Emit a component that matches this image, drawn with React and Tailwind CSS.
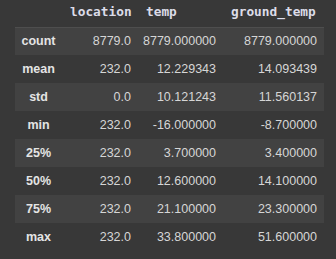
const columns = ["location", "temp", "ground_temp"];

const rows = [
  ["count", "8779.0", "8779.000000", "8779.000000"],
  ["mean", "232.0", "12.229343", "14.093439"],
  ["std", "0.0", "10.121243", "11.560137"],
  ["min", "232.0", "-16.000000", "-8.700000"],
  ["25%", "232.0", "3.700000", "3.400000"],
  ["50%", "232.0", "12.600000", "14.100000"],
  ["75%", "232.0", "21.100000", "23.300000"],
  ["max", "232.0", "33.800000", "51.600000"],
];

const widths = ["w-[76px]", "w-[85px]", "w-[101px]"];

export default function App() {
  return (
    <div className="w-[336px] h-[259px] bg-[#383838] pl-[15px] font-['Liberation_Sans',Arial,sans-serif] text-[12.5px] text-[#d6d6d6]">
      <table className="border-collapse table-fixed w-[309px]">
        <thead>
          <tr className="h-[27px] border-b border-[#4e4e4e]">
            <th className="w-[47px]"></th>
            {columns.map((col, i) => (
              <th
                key={col}
                className={`${widths[i]} pl-[8px] pb-[4px] text-left font-['DejaVu_Sans_Mono',monospace] text-[12.8px] font-bold text-[#dcdce8]`}
              >
                {col}
              </th>
            ))}
          </tr>
        </thead>
        <tbody>
          {rows.map((row, r) => (
            <tr key={row[0]} className={`h-[28px] ${r % 2 === 0 ? "bg-[#424242]" : ""}`}>
              <th className="text-center font-bold text-[#e4e4e4]">{row[0]}</th>
              {row.slice(1).map((v, i) => (
                <td key={i} className="text-right pr-[7px]">
                  {v}
                </td>
              ))}
            </tr>
          ))}
        </tbody>
      </table>
    </div>
  );
}
